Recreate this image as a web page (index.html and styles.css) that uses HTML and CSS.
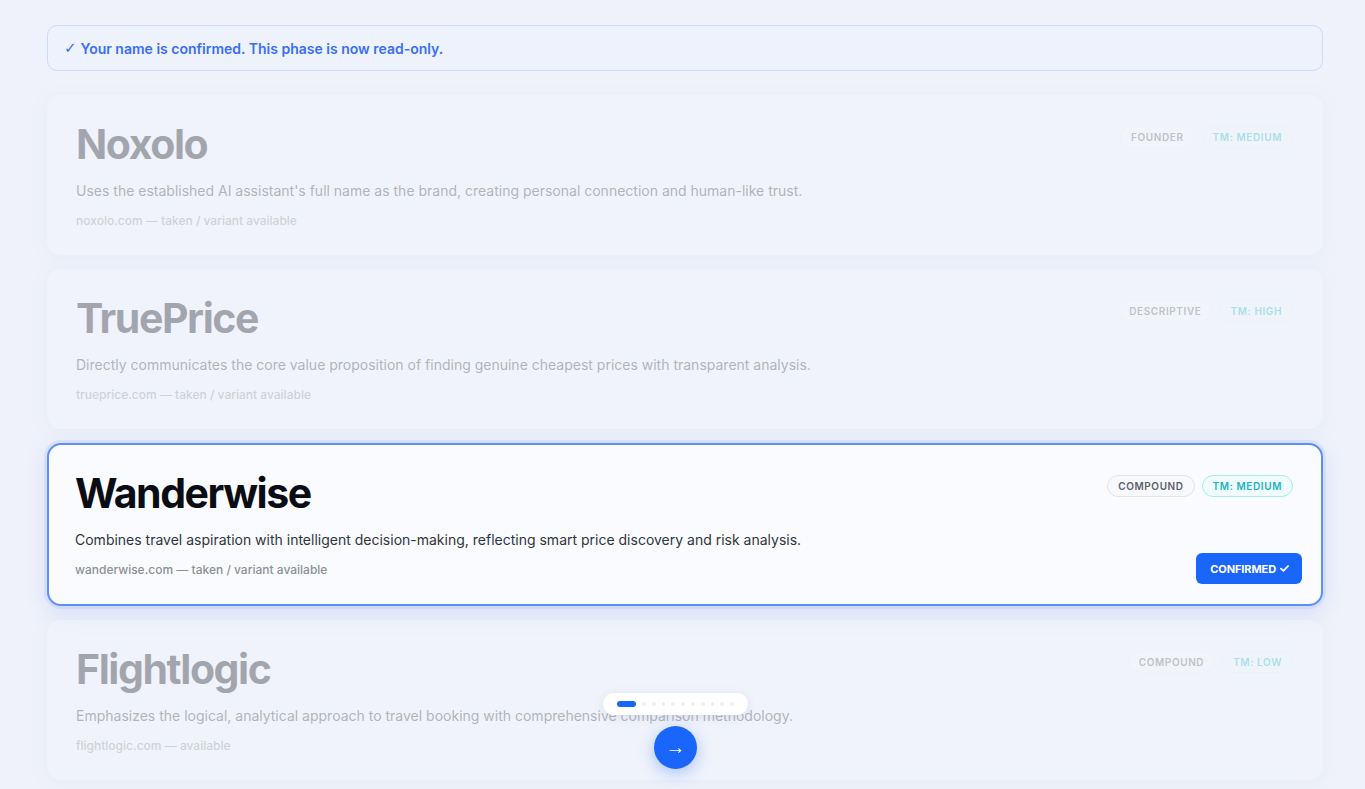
FILE: index.html
```html
<!DOCTYPE html>
<html lang="en">
<head>
  <meta charset="UTF-8" />
  <meta name="viewport" content="width=device-width, initial-scale=1.0" />
  <title>Name Selection</title>
  <link rel="stylesheet" href="styles.css">
</head>
<body>
  <main class="phase">
    <div class="notice"><span class="tick">✓</span> Your name is confirmed. This phase is now read-only.</div>

    <div class="cards">
      <div class="card faded">
        <div class="info">
          <h2 class="name">Noxolo</h2>
          <p class="desc">Uses the established AI assistant's full name as the brand, creating personal connection and human-like trust.</p>
          <p class="domain">noxolo.com — taken / variant available</p>
        </div>
        <div class="side">
          <div class="tags">
            <span class="tag">Founder</span>
            <span class="tag tm">TM: Medium</span>
          </div>
        </div>
      </div>

      <div class="card faded">
        <div class="info">
          <h2 class="name">TruePrice</h2>
          <p class="desc">Directly communicates the core value proposition of finding genuine cheapest prices with transparent analysis.</p>
          <p class="domain">trueprice.com — taken / variant available</p>
        </div>
        <div class="side">
          <div class="tags">
            <span class="tag">Descriptive</span>
            <span class="tag tm">TM: High</span>
          </div>
        </div>
      </div>

      <div class="card selected">
        <div class="info">
          <h2 class="name">Wanderwise</h2>
          <p class="desc">Combines travel aspiration with intelligent decision-making, reflecting smart price discovery and risk analysis.</p>
          <p class="domain">wanderwise.com — taken / variant available</p>
        </div>
        <div class="side">
          <div class="tags">
            <span class="tag">Compound</span>
            <span class="tag tm">TM: Medium</span>
          </div>
          <button class="confirmed">CONFIRMED
            <svg width="9" height="7" viewBox="0 0 10 8"><path d="M1 4.2 3.7 6.8 9 1.2" fill="none" stroke="#fff" stroke-width="2" stroke-linecap="round" stroke-linejoin="round"/></svg>
          </button>
        </div>
      </div>

      <div class="card faded">
        <div class="info">
          <h2 class="name">Flightlogic</h2>
          <p class="desc">Emphasizes the logical, analytical approach to travel booking with comprehensive comparison methodology.</p>
          <p class="domain">flightlogic.com — available</p>
        </div>
        <div class="side">
          <div class="tags">
            <span class="tag">Compound</span>
            <span class="tag tm">TM: Low</span>
          </div>
        </div>
      </div>
    </div>
  </main>

  <!-- floating step nav -->
  <div class="stepper">
    <div class="dots">
      <span class="dot active"></span>
      <span class="dot"></span><span class="dot"></span><span class="dot"></span>
      <span class="dot"></span><span class="dot"></span><span class="dot"></span>
      <span class="dot"></span><span class="dot"></span><span class="dot"></span>
      <span class="dot"></span>
    </div>
    <button class="next">→</button>
  </div>
</body>
</html>
```

FILE: styles.css
```css
body {
  margin: 0;
  font-family: 'Inter', 'Noto Sans', sans-serif;
  background: #eff2fb;
  color: #0b0d14;
  height: 789px;
  overflow: hidden;
}

.phase {
  padding: 25px 42px 0 47px;
}

.notice {
  height: 46px;
  box-sizing: border-box;
  display: flex;
  align-items: center;
  gap: 4px;
  padding: 0 16px 0;
  background: #edf2fd;
  border: 1px solid #c9dafb;
  border-radius: 10px;
  color: #3a6ff2;
  font-size: 14px;
  font-weight: 600;
}

.tick {
  font-family: 'DejaVu Sans', sans-serif;
  font-weight: 400;
  font-size: 15px;
}

.cards {
  display: flex;
  flex-direction: column;
  gap: 14px;
  margin-top: 24px;
}

.card {
  display: grid;
  grid-template-columns: 1fr auto;
  height: 160px;
  box-sizing: border-box;
  padding: 24px 20px 20px 28px;
  background: #f5f7fd;
  border-radius: 14px;
  border: 1px solid transparent;
}

.card.faded {
  opacity: 0.33;
  box-shadow: 0 2px 14px rgba(150, 170, 220, 0.25);
}

.card.selected {
  height: 163px;
  background: #fafbfe;
  border: 2px solid #5f8ff6;
  box-shadow: 0 0 0 3px rgba(110, 150, 245, 0.12), 0 6px 22px rgba(90, 130, 230, 0.18);
  padding-left: 26px;
  padding-right: 19px;
}

.name {
  margin: 0;
  font-size: 41px;
  line-height: 48px;
  font-weight: 700;
  letter-spacing: -0.035em;
}

.desc {
  margin: 14px 0 0;
  font-size: 14px;
  color: #31353d;
}

.domain {
  margin: 14px 0 0;
  font-size: 12px;
  font-weight: 500;
  color: #8c9099;
}

.side {
  display: flex;
  flex-direction: column;
  align-items: flex-end;
  justify-content: space-between;
}

.tags {
  display: flex;
  gap: 7px;
  margin: 6px 9px 0 0;
}

.tag {
  height: 22px;
  box-sizing: border-box;
  display: flex;
  align-items: center;
  padding: 0 10px;
  border: 1px solid #e2e4ea;
  border-radius: 11px;
  background: #f8f9fc;
  font-size: 10px;
  font-weight: 600;
  letter-spacing: 0.06em;
  text-transform: uppercase;
  color: #5c616c;
}

.faded .tag {
  border-color: #eef0f4;
}

.tag.tm {
  border-color: #a9ebef;
  background: #effbfd;
  color: #1bb5c6;
}

.faded .tag.tm {
  border-color: #dff5f8;
}

.confirmed {
  display: flex;
  align-items: center;
  gap: 4px;
  height: 31px;
  padding: 0 13px 0 14px;
  border: none;
  border-radius: 6px;
  background: #1a66fb;
  color: #fff;
  font-family: inherit;
  font-size: 11px;
  font-weight: 700;
  letter-spacing: -0.01em;
}

.stepper {
  position: fixed;
  left: 603px;
  top: 693px;
  width: 145px;
  display: flex;
  flex-direction: column;
  align-items: center;
  gap: 11px;
}

.dots {
  width: 100%;
  height: 22px;
  box-sizing: border-box;
  display: flex;
  align-items: center;
  gap: 6px;
  padding: 0 14px;
  background: #fff;
  border-radius: 11px;
  box-shadow: 0 2px 10px rgba(120, 140, 190, 0.18);
}

.dot {
  width: 4px;
  height: 4px;
  border-radius: 50%;
  background: #eceef3;
}

.dot.active {
  width: 20px;
  height: 6px;
  border-radius: 3px;
  background: #1a66fb;
}

.next {
  width: 43px;
  height: 43px;
  border: none;
  border-radius: 50%;
  background: #1a66fb;
  color: #fff;
  font-size: 20px;
  line-height: 1;
  padding: 0 0 2px;
  box-shadow: 0 4px 16px rgba(26, 102, 251, 0.35);
}
```
